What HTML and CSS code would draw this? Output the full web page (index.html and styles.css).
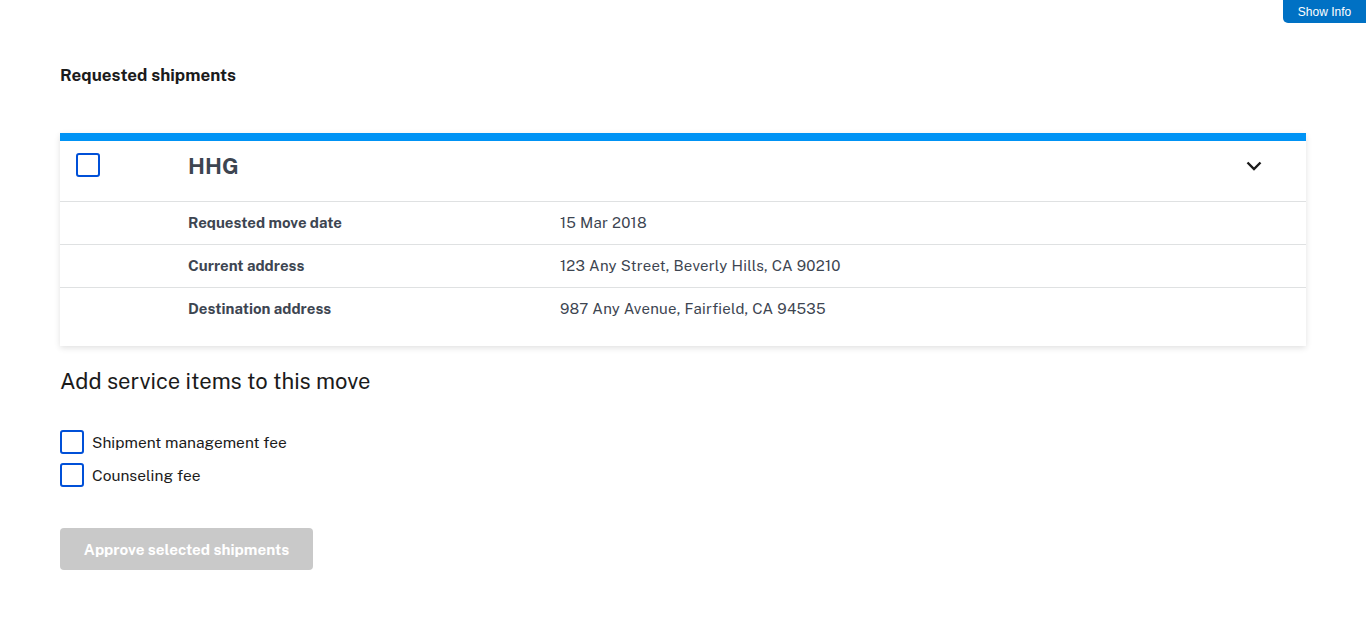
FILE: index.html
```html
<!DOCTYPE html>
<html lang="en">
<head>
<meta charset="utf-8">
<link rel="stylesheet" href="styles.css">
</head>
<body>
<button class="show-info">Show Info</button>
<main class="page">
  <h2 class="section-title">Requested shipments</h2>
  <section class="card">
    <div class="card-head">
      <div class="cell-check"><span class="checkbox"></span></div>
      <h3 class="shipment-type">HHG</h3>
      <svg class="chevron" width="16" height="10" viewBox="0 0 16 10" aria-hidden="true"><path d="M1.5 1.5 L8 8 L14.5 1.5" fill="none" stroke="#1b1b1b" stroke-width="2.4"/></svg>
    </div>
    <dl class="details">
      <div class="row"><dt>Requested move date</dt><dd>15 Mar 2018</dd></div>
      <div class="row"><dt>Current address</dt><dd>123 Any Street, Beverly Hills, CA 90210</dd></div>
      <div class="row"><dt>Destination address</dt><dd>987 Any Avenue, Fairfield, CA 94535</dd></div>
    </dl>
  </section>
  <h2 class="service-title">Add service items to this move</h2>
  <div class="options">
    <label class="option"><span class="checkbox"></span>Shipment management fee</label>
    <label class="option"><span class="checkbox"></span>Counseling fee</label>
  </div>
  <button class="approve" disabled>Approve selected shipments</button>
</main>
</body>
</html>
```
FILE: styles.css
```css
* { box-sizing: border-box; }
body {
  margin: 0;
  font-family: "Public Sans", Inter, "Noto Sans", sans-serif;
  color: #1b1b1b;
  background: #fff;
}
.show-info {
  position: absolute;
  top: 0;
  right: 0;
  width: 83px;
  height: 23px;
  border: 0;
  border-radius: 0 0 0 5px;
  background: #0071c4;
  color: #fff;
  font-family: "Liberation Sans", Arial, sans-serif;
  font-size: 12px;
  padding: 0;
}
.page {
  padding: 63px 60px 0 60px;
}
.section-title {
  margin: 0;
  font-size: 17px;
  font-weight: 700;
  line-height: 24px;
}
.card {
  margin-top: 46px;
  border-top: 8px solid #0093f5;
  background: #fff;
  box-shadow: 0 2px 6px rgba(0,0,0,0.12);
  padding-bottom: 16px;
}
.card-head {
  display: flex;
  align-items: flex-start;
  height: 61px;
  padding: 12px 44px 0 16px;
  border-bottom: 1px solid #dfe1e2;
}
.cell-check { width: 112px; display: flex; }
.shipment-type {
  margin: 0;
  flex: 1;
  font-size: 22px;
  font-weight: 700;
  color: #3d4551;
  line-height: 26px;
}
.chevron { display: block; margin-top: 8px; }
.checkbox {
  width: 24px;
  height: 24px;
  border: 2px solid #0050d8;
  border-radius: 3px;
  background: #fff;
  flex: none;
  display: inline-block;
}
.details { margin: 0; }
.row {
  display: flex;
  height: 43px;
  align-items: center;
  padding-left: 128px;
  padding-bottom: 2px;
  border-bottom: 1px solid #dfe1e2;
  font-size: 15px;
  color: #3d4551;
}
.row:last-child { border-bottom: 0; height: 42px; }
.row dt { width: 372px; font-weight: 700; }
.row dd { margin: 0; letter-spacing: 0.23px; }
.service-title {
  margin: 20px 0 0;
  font-size: 22px;
  font-weight: 400;
  line-height: 30px;
}
.options {
  margin-top: 34px;
  display: flex;
  flex-direction: column;
  gap: 9px;
}
.option {
  display: flex;
  align-items: center;
  gap: 8px;
  font-size: 15.5px;
  line-height: 24px;
}
.approve {
  margin-top: 41px;
  width: 253px;
  height: 42px;
  border: 0;
  border-radius: 4px;
  background: #c9c9c9;
  color: #fff;
  font-family: inherit;
  font-size: 15.2px;
  font-weight: 700;
}
```
